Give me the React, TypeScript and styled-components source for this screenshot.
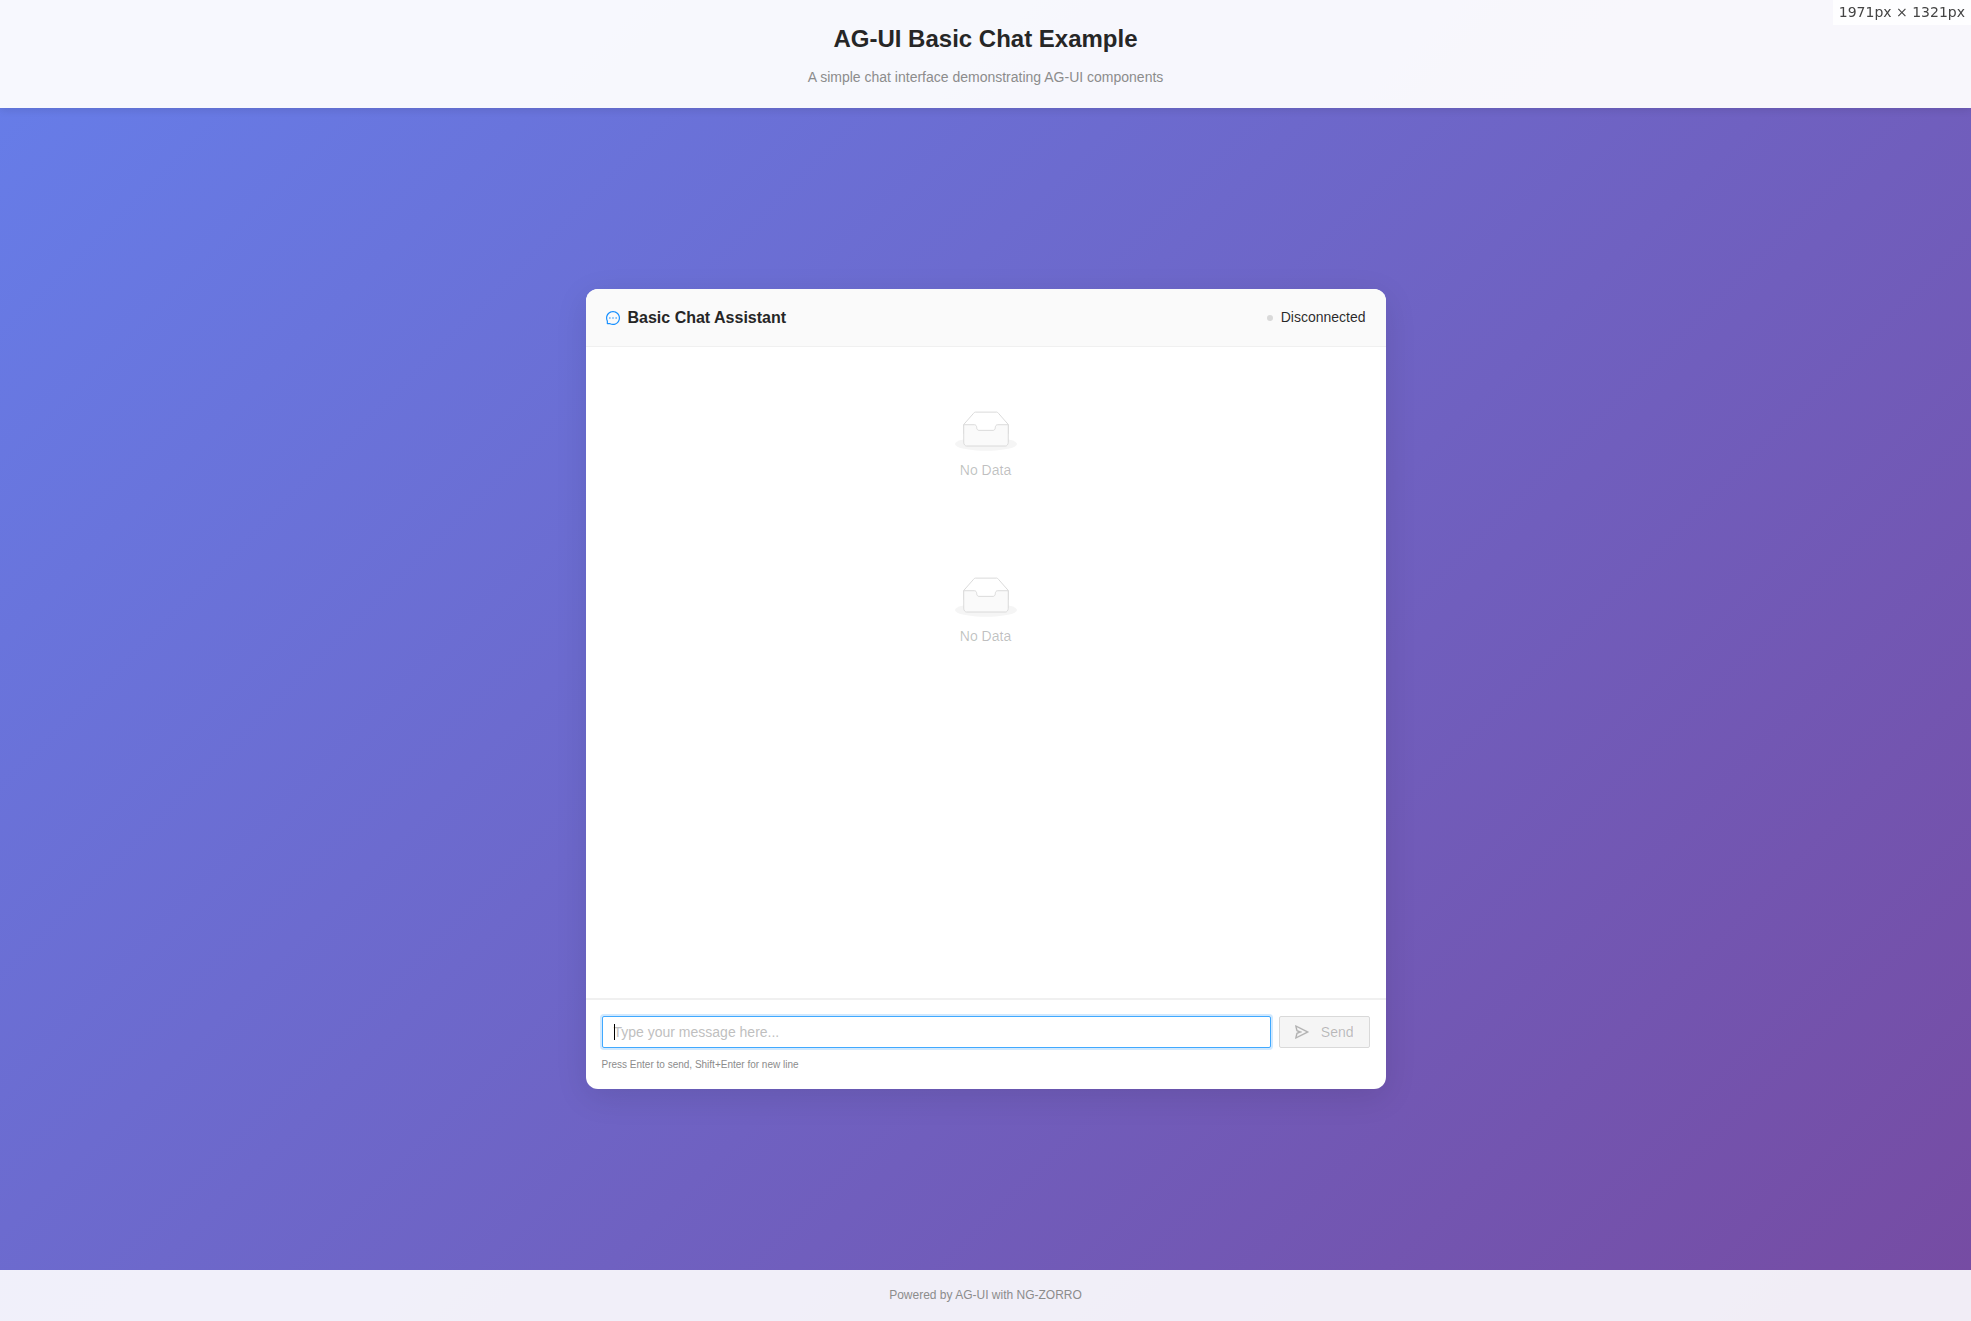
import React, { useState } from 'react';
import styled, { createGlobalStyle } from 'styled-components';
import { AiOutlineMessage, AiOutlineSend } from 'react-icons/ai';

const GlobalStyle = createGlobalStyle`
  *, *::before, *::after { box-sizing: border-box; }
  body {
    margin: 0;
    font-family: "Liberation Sans", Arial, sans-serif;
    font-size: 14px;
    line-height: 22px;
    color: rgba(0, 0, 0, 0.85);
  }
`;

const Page = styled.div`
  display: flex;
  flex-direction: column;
  min-height: 100vh;
  background: linear-gradient(135deg, #667eea 0%, #764ba2 100%);
`;

const PageHeader = styled.header`
  padding: 20px;
  text-align: center;
  background: rgba(255, 255, 255, 0.95);
  box-shadow: 0 2px 8px rgba(0, 0, 0, 0.1);
`;

const PageTitle = styled.h1`
  margin: 0 0 8px;
  font-size: 24px;
  line-height: 38px;
  font-weight: 600;
  color: #262626;
`;

const Subtitle = styled.p`
  margin: 0;
  color: #8c8c8c;
`;

const Main = styled.main`
  flex: 1;
  display: flex;
  align-items: center;
  justify-content: center;
  padding: 20px;
`;

const ChatCard = styled.section`
  display: flex;
  flex-direction: column;
  width: 100%;
  max-width: 800px;
  height: 800px;
  overflow: hidden;
  background: #fff;
  border-radius: 12px;
  box-shadow: 0 8px 32px rgba(0, 0, 0, 0.1);
`;

const ChatHeader = styled.div`
  display: flex;
  align-items: center;
  justify-content: space-between;
  padding: 16px 20px;
  background: #fafafa;
  border-bottom: 1px solid #f0f0f0;
`;

const ChatTitle = styled.h2`
  display: flex;
  align-items: center;
  gap: 8px;
  margin: 0;
  font-size: 16px;
  line-height: 25px;
  font-weight: 600;
  color: #262626;

  svg { color: #1890ff; }
`;

const Status = styled.div`
  display: flex;
  align-items: center;
  gap: 8px;
  height: 24px;
  padding-bottom: 2px;
`;

const StatusDot = styled.span`
  width: 6px;
  height: 6px;
  margin-top: 2px;
  border-radius: 50%;
  background: #d9d9d9;
`;

const Messages = styled.div`
  flex: 1;
  padding: 32px 16px;
  border-bottom: 1px solid #f0f0f0;
`;

const EmptyBlock = styled.div`
  display: flex;
  flex-direction: column;
  align-items: center;
  gap: 8px;
  margin: 32px 0;
  color: rgba(0, 0, 0, 0.25);

  & + & { margin-top: 96px; }
`;

const Composer = styled.form`
  padding: 16px;
  border-top: 1px solid #f0f0f0;
`;

const ComposerRow = styled.div`
  display: flex;
  gap: 8px;
`;

const InputWrap = styled.div`
  position: relative;
  display: flex;
  flex: 1;
  min-width: 0;
`;

const Caret = styled.span`
  display: none;
  position: absolute;
  top: 8px;
  left: 12px;
  width: 1px;
  height: 16px;
  background: #000;
  pointer-events: none;
`;

const MessageInput = styled.textarea`
  flex: 1;
  min-width: 0;
  height: 32px;
  padding: 4px 11px;
  font: inherit;
  color: inherit;
  resize: none;
  border: 1px solid #d9d9d9;
  border-radius: 2px;
  outline: none;

  &::placeholder { color: #bfbfbf; }
  &:placeholder-shown { caret-color: transparent; }
  &:focus {
    border-color: #40a9ff;
    box-shadow: 0 0 0 2px rgba(24, 144, 255, 0.2);
  }
  &:focus:placeholder-shown + ${Caret} { display: block; }
`;

const SendButton = styled.button`
  display: flex;
  align-items: center;
  gap: 12px;
  height: 32px;
  padding: 0 15px;
  font: inherit;
  color: #fff;
  background: #1890ff;
  border: 1px solid #1890ff;
  border-radius: 2px;

  &:disabled {
    color: rgba(0, 0, 0, 0.25);
    background: #f5f5f5;
    border-color: #d9d9d9;
  }

  svg {
    stroke: currentColor;
    stroke-width: 16;
  }
`;

const Hint = styled.p`
  margin: 8px 0 0;
  font-size: 10px;
  line-height: 17px;
  color: #8c8c8c;
`;

const PageFooter = styled.footer`
  padding: 16px;
  text-align: center;
  font-size: 12px;
  line-height: 19px;
  color: #8c8c8c;
  background: rgba(255, 255, 255, 0.9);
`;

const SizeBadge = styled.div`
  position: fixed;
  top: 0;
  right: 0;
  padding: 2px 6px;
  font-family: "DejaVu Sans", sans-serif;
  font-size: 14px;
  line-height: 21px;
  color: #444;
  background: rgba(255, 255, 255, 0.8);
`;

function Empty() {
  return (
    <EmptyBlock>
      <svg width="62" height="40" viewBox="0 0 64 41" aria-hidden="true">
        <g transform="translate(0 1)" fill="none" fillRule="evenodd">
          <ellipse fill="#f5f5f5" cx="32" cy="33" rx="32" ry="7" />
          <g fillRule="nonzero" stroke="#d9d9d9">
            <path d="M55 12.76L44.854 1.258C44.367.474 43.656 0 42.907 0H21.093c-.749 0-1.46.474-1.947 1.257L9 12.761V22h46v-9.24z" />
            <path
              fill="#fafafa"
              d="M41.613 15.931c0-1.605.994-2.93 2.227-2.931H55v18.137C55 33.26 53.68 35 52.05 35h-40.1C10.32 35 9 33.259 9 31.137V13h11.16c1.233 0 2.227 1.323 2.227 2.928v.022c0 1.605 1.005 2.901 2.237 2.901h14.752c1.232 0 2.237-1.308 2.237-2.913v-.007z"
            />
          </g>
        </g>
      </svg>
      <span>No Data</span>
    </EmptyBlock>
  );
}

export default function App() {
  const [text, setText] = useState('');

  return (
    <>
      <GlobalStyle />
      <Page>
        <PageHeader>
          <PageTitle>AG-UI Basic Chat Example</PageTitle>
          <Subtitle>A simple chat interface demonstrating AG-UI components</Subtitle>
        </PageHeader>
        <Main>
          <ChatCard>
            <ChatHeader>
              <ChatTitle>
                <AiOutlineMessage size={14} viewBox="64 64 896 896" />
                Basic Chat Assistant
              </ChatTitle>
              <Status>
                <StatusDot />
                Disconnected
              </Status>
            </ChatHeader>
            <Messages>
              <Empty />
              <Empty />
            </Messages>
            <Composer onSubmit={(e) => e.preventDefault()}>
              <ComposerRow>
                <InputWrap>
                  <MessageInput
                    autoFocus
                    rows={1}
                    aria-label="Message"
                    placeholder="Type your message here..."
                    value={text}
                    onChange={(e) => setText(e.target.value)}
                  />
                  <Caret />
                </InputWrap>
                <SendButton type="submit" disabled={!text.trim()}>
                  <AiOutlineSend size={14} viewBox="64 64 896 896" />
                  Send
                </SendButton>
              </ComposerRow>
              <Hint>Press Enter to send, Shift+Enter for new line</Hint>
            </Composer>
          </ChatCard>
        </Main>
        <PageFooter>Powered by AG-UI with NG-ZORRO</PageFooter>
      </Page>
      <SizeBadge>1971px × 1321px</SizeBadge>
    </>
  );
}
